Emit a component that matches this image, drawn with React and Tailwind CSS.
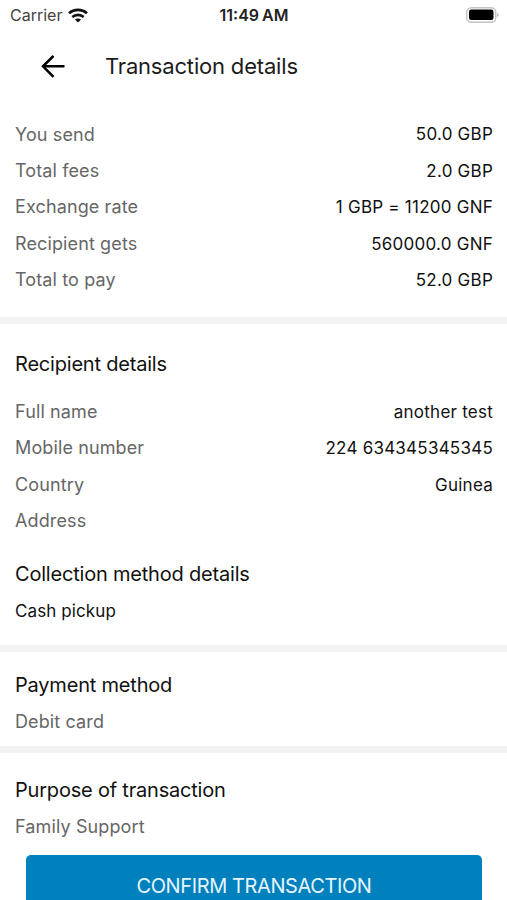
import React from 'react';

const amounts = [
    { label: 'You send', value: '50.0 GBP' },
    { label: 'Total fees', value: '2.0 GBP' },
    { label: 'Exchange rate', value: '1 GBP = 11200 GNF' },
    { label: 'Recipient gets', value: '560000.0 GNF' },
    { label: 'Total to pay', value: '52.0 GBP' }
];

const recipient = [
    { label: 'Full name', value: 'another test' },
    { label: 'Mobile number', value: '224 634345345345' },
    { label: 'Country', value: 'Guinea' },
    { label: 'Address', value: '' }
];

const Row = ({ label, value }) => (
    <div className="flex h-[36.4px] items-center justify-between">
        <span className="text-[18px] tracking-[0.12px] text-[#666666]">{label}</span>
        <span className="pt-[2px] text-[17px] tracking-[0.24px] text-[#111111]">{value}</span>
    </div>
);

const Heading = ({ children }) => (
    <h2 className="flex h-9 items-center text-[20px] tracking-[-0.2px] text-[#111111]">{children}</h2>
);

const Divider = () => <div className="h-[7px] shrink-0 bg-[#f2f2f2]"></div>;

const StatusBar = () => (
    <div className="grid h-[30px] shrink-0 grid-cols-3 items-center pl-[9px] pr-2">
        <div className="flex items-center gap-[6px] pl-px">
            <span className="text-[16px] text-[#444444]">Carrier</span>
            <svg width="20" height="15" viewBox="0 0 20 15" fill="none" stroke="#111111" strokeWidth="2.6">
                <path d="M1 5.2C6 .7 14 .7 19 5.2" />
                <path d="M4.3 9C7.6 6.1 12.4 6.1 15.7 9" />
                <path d="M10 14.6 6.9 11.5C8.7 10 11.3 10 13.1 11.5Z" fill="#111111" stroke="none" />
            </svg>
        </div>
        <span className="text-center text-[16px] font-semibold text-[#222222]">
            11:49<span className="ml-[3px]">AM</span>
        </span>
        <svg className="mb-px justify-self-end" width="33" height="16" viewBox="0 0 33 16">
            <rect x=".75" y=".75" width="29" height="14.5" rx="4.5" fill="#ffffff" stroke="#c4c4c4" strokeWidth="1.5" />
            <rect x="3" y="2.5" width="24.5" height="10.5" rx="2.2" fill="#000000" />
            <path d="M31.3 6v4c1.6-.6 1.6-3.4 0-4Z" fill="#aaaaaa" />
        </svg>
    </div>
);

const App = () => {
    return (
        <div className="flex h-[900px] w-[507px] flex-col overflow-hidden bg-white font-['Inter',sans-serif]">
            <StatusBar />

            <header className="flex h-[72px] shrink-0 items-center pl-10">
                <svg width="26" height="24" viewBox="0 0 26 24" fill="none" stroke="#000000" strokeWidth="2.6">
                    <path d="M24.5 12.3H3M13.5 1.8 3 12.3 13.5 22.8" />
                </svg>
                <h1 className="ml-[39px] text-[22px] tracking-[-0.18px] text-[#1c1c1c]">Transaction details</h1>
            </header>

            <section className="h-[215px] shrink-0 pl-[15px] pr-[14px] pt-[14px]">
                {amounts.map((row) => (
                    <Row key={row.label} {...row} />
                ))}
            </section>
            <Divider />

            <section className="h-[321px] shrink-0 pl-[15px] pr-[14px] pt-[22px]">
                <Heading>Recipient details</Heading>
                <div className="pt-[11.4px]">
                    {recipient.map((row) => (
                        <Row key={row.label} {...row} />
                    ))}
                </div>
                <div className="pt-[17px]">
                    <Heading>Collection method details</Heading>
                    <p className="flex h-9 items-center pt-[3px] text-[17px] tracking-[0.1px] text-[#111111]">Cash pickup</p>
                </div>
            </section>
            <Divider />

            <section className="h-[94px] shrink-0 pl-[15px] pt-[15px]">
                <Heading>Payment method</Heading>
                <p className="flex h-9 items-center text-[18px] tracking-[0.12px] text-[#666666]">Debit card</p>
            </section>
            <Divider />

            <section className="h-[102px] shrink-0 pl-[15px] pt-[19px]">
                <Heading>Purpose of transaction</Heading>
                <p className="flex h-9 items-center text-[18px] tracking-[0.12px] text-[#666666]">Family Support</p>
            </section>

            <button className="ml-[26px] h-[62px] w-[456px] shrink-0 rounded-[5px] bg-[#0080bd] text-[20px] tracking-[-0.4px] text-[#e6f5ff]">
                CONFIRM TRANSACTION
            </button>
        </div>
    );
};

export default App;
